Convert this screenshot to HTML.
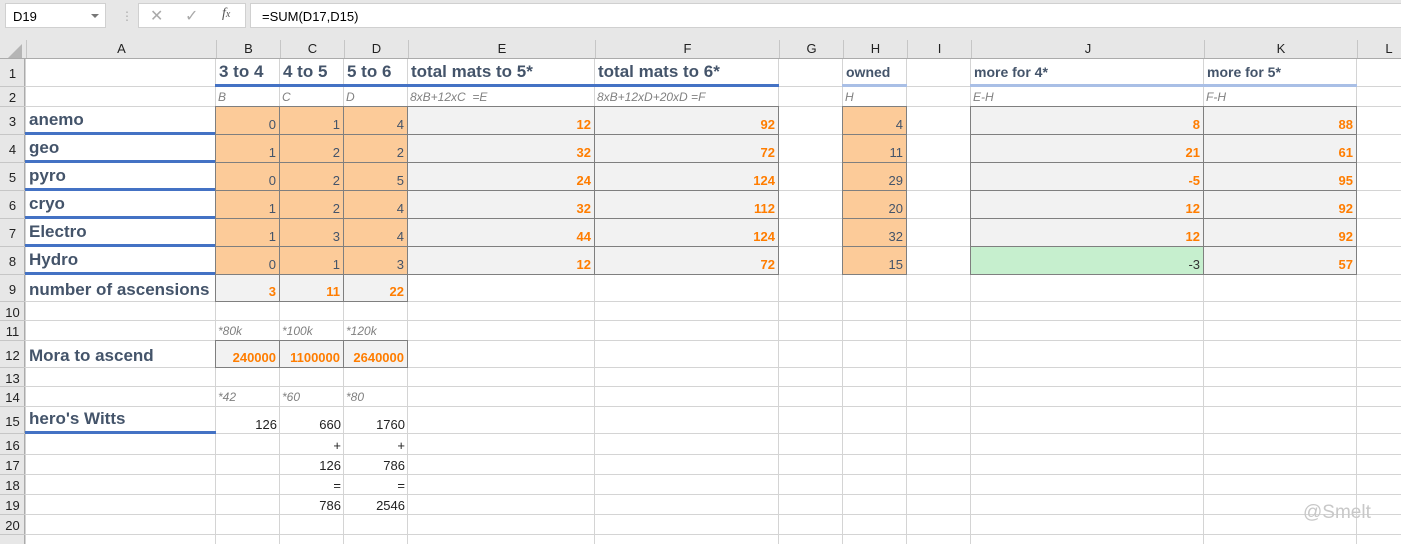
<!DOCTYPE html>
<html><head><meta charset="utf-8">
<style>
*{margin:0;padding:0;box-sizing:border-box}
html,body{width:1401px;height:544px;overflow:hidden}
body{background:#fff;font-family:"Liberation Sans",Calibri,sans-serif;position:relative}
.a{position:absolute}
.c{position:absolute;white-space:nowrap;overflow:visible;font-size:13px;color:#222;display:flex;align-items:flex-end;padding:0 3px 2px 3px}
.r{justify-content:flex-end}
.h{font-weight:bold;font-size:17px;color:#44546a;padding-left:4px;padding-bottom:2px}
.h2{font-weight:bold;font-size:14px;color:#44546a;padding-left:4px;padding-bottom:4px}
.it{font-style:italic;color:#808080;font-size:12px;padding-bottom:3px}
.o{font-weight:bold;color:#ff7d00}
.pe{background:#fccb99;color:#44546a}
.gr{background:#f2f2f2;border:1px solid #7f7f7f}
</style></head><body>
<div class="a" style="left:0;top:0;width:1401px;height:59px;background:#e7e7e7"></div>
<div class="a" style="left:5px;top:3px;width:101px;height:25px;background:#fff;border:1px solid #d0d0d0;font-size:13px;padding:5px 0 0 7px">D19<span style="position:absolute;right:6px;top:10px;border-left:4px solid transparent;border-right:4px solid transparent;border-top:4px solid #777"></span></div>
<div class="a" style="left:121px;top:9px;color:#aaa;font-size:12px">⋮</div>
<div class="a" style="left:138px;top:3px;width:108px;height:25px;background:#fff;border:1px solid #d0d0d0"></div>
<div class="a" style="left:150px;top:6px;color:#aaa;font-size:16px">✕</div>
<div class="a" style="left:185px;top:6px;color:#aaa;font-size:16px">✓</div>
<div class="a" style="left:222px;top:6px;color:#555;font-size:14px;font-style:italic;font-family:'Liberation Serif',serif">f<span style="font-size:10px">x</span></div>
<div class="a" style="left:250px;top:3px;width:1160px;height:25px;background:#fff;border:1px solid #d0d0d0;font-size:13px;padding:5px 0 0 11px">=SUM(D17,D15)</div>
<div class="a" style="left:8px;top:44px;width:0;height:0;border-left:14px solid transparent;border-bottom:14px solid #b5b5b5"></div>
<div id="g"></div>
<script>
var cols=[26,216,280,344,408,595,779,843,907,971,1204,1357,1420];
var names="ABCDEFGHIJKL";
var rows=[59,87,107,135,163,191,219,247,275,302,321,341,368,387,407,434,455,475,495,515,535,560];
var h='';
for(var i=0;i<12;i++){var x=cols[i],w=cols[i+1]-x;
h+='<div class="a" style="left:'+x+'px;top:40px;width:'+w+'px;height:19px;border-left:1px solid #c6c6c6;text-align:center;font-size:13px;padding-top:1px;color:#222">'+names[i]+'</div>';
h+='<div class="a" style="left:'+(x-1)+'px;top:59px;width:1px;height:490px;background:#d4d4d4"></div>';}
h+='<div class="a" style="left:0;top:58px;width:1401px;height:1px;background:#ababab"></div>';
h+='<div class="a" style="left:0;top:59px;width:25px;height:490px;background:#e7e7e7;border-right:1px solid #ababab"></div>';
for(var j=0;j<21;j++){var y=rows[j],hh=rows[j+1]-y;
h+='<div class="a" style="left:26px;top:'+(y+hh-1)+'px;width:1380px;height:1px;background:#d4d4d4"></div>';
h+='<div class="a" style="left:0;top:'+y+'px;width:25px;height:'+hh+'px;font-size:13px;color:#222;display:flex;align-items:center;justify-content:center;border-bottom:1px solid #c6c6c6;padding-top:2px">'+(j+1)+'</div>';}
function C(c,r,t,cl,st,c2){var ci=names.indexOf(c),ce=c2?names.indexOf(c2)+1:ci+1;var x=cols[ci],w=cols[ce]-x,y=rows[r-1],hh=rows[r]-y;
h+='<div class="c '+(cl||'')+'" style="left:'+(x-1)+'px;top:'+(y-1)+'px;width:'+(w+1)+'px;height:'+(hh+1)+'px;'+(st||'')+'">'+t+'</div>';}
var bb='border-bottom:3px solid #4472c4;',lb='border-bottom:3px solid #a9bfe6;';
C('B',1,'3 to 4','h',bb);C('C',1,'4 to 5','h',bb);C('D',1,'5 to 6','h',bb);
C('E',1,'total mats to 5*','h',bb);C('F',1,'total mats to 6*','h',bb);
C('H',1,'owned','h2',lb);C('J',1,'more for 4*','h2',lb);C('K',1,'more for 5*','h2',lb);
C('B',2,'B','it');C('C',2,'C','it');C('D',2,'D','it');C('E',2,'8xB+12xC&nbsp; =E','it');C('F',2,'8xB+12xD+20xD =F','it');
C('H',2,'H','it');C('J',2,'E-H','it');C('K',2,'F-H','it');
var el=['anemo','geo','pyro','cryo','Electro','Hydro'];
var B=[0,1,0,1,1,0],Cc=[1,2,2,2,3,1],D=[4,2,5,4,4,3],E=[12,32,24,32,44,12],F=[92,72,124,112,124,72],H=[4,11,29,20,32,15],J=[8,21,-5,12,12,-3],K=[88,61,95,92,92,57];
var pb='border:1px solid #7f7f7f;';
for(var k=0;k<6;k++){var r=k+3;
C('A',r,el[k],'h',bb);
C('B',r,B[k],'r pe',pb);C('C',r,Cc[k],'r pe',pb);C('D',r,D[k],'r pe',pb);
C('E',r,E[k],'r o gr');C('F',r,F[k],'r o gr');C('H',r,H[k],'r pe',pb);
if(k==5)C('J',r,J[k],'r','background:#c6efce;border:1px solid #7f7f7f;color:#333');else C('J',r,J[k],'r o gr');
C('K',r,K[k],'r o gr');}
C('A',9,'number of ascensions','h');C('B',9,'3','r o gr');C('C',9,'11','r o gr');C('D',9,'22','r o gr');
C('B',11,'*80k','it');C('C',11,'*100k','it');C('D',11,'*120k','it');
C('A',12,'Mora to ascend','h');C('B',12,'240000','r o gr');C('C',12,'1100000','r o gr');C('D',12,'2640000','r o gr');
C('B',14,'*42','it');C('C',14,'*60','it');C('D',14,'*80','it');
C('A',15,"hero's Witts",'h',bb);C('B',15,'126','r');C('C',15,'660','r');C('D',15,'1760','r');
C('C',16,'+','r');C('D',16,'+','r');C('C',17,'126','r');C('D',17,'786','r');
C('C',18,'=','r');C('D',18,'=','r');C('C',19,'786','r');C('D',19,'2546','r');
h+='<div class="a" style="left:1303px;top:502px;font-size:19px;color:#c8c8c8">@Smelt</div>';
document.getElementById('g').innerHTML=h;
</script>
</body></html>
